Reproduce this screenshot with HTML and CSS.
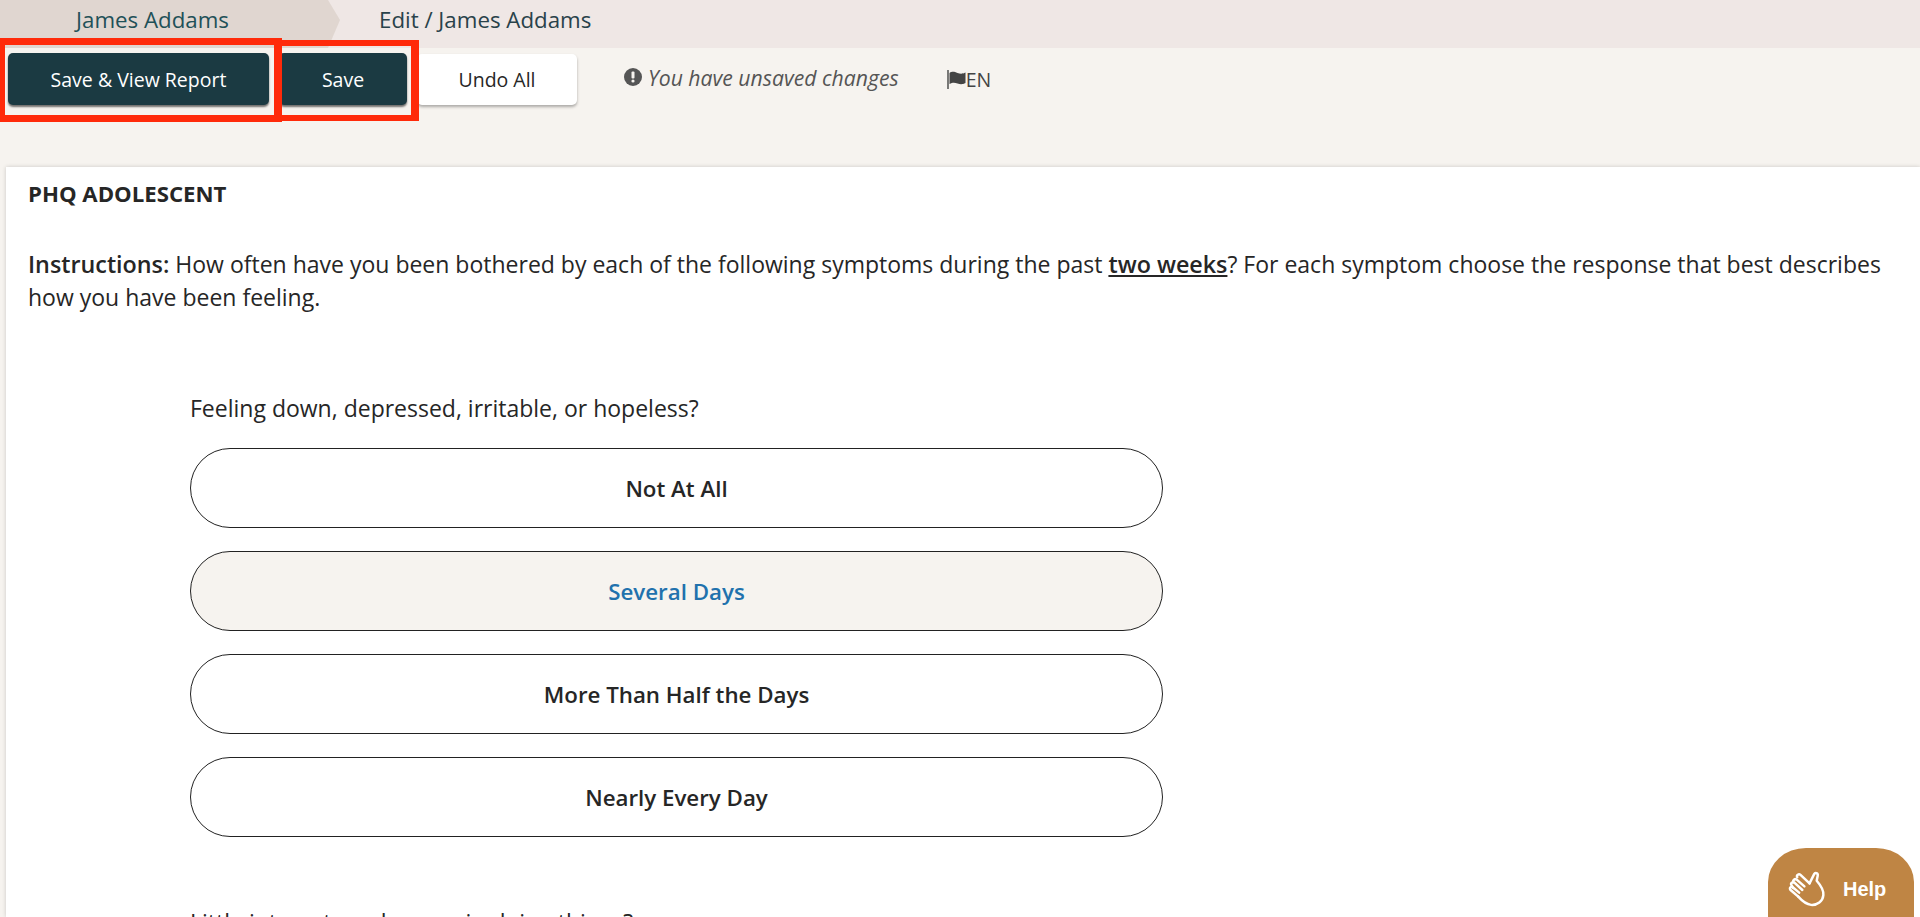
FILE: index.html
```html
<!DOCTYPE html>
<html lang="en">
<head>
<meta charset="utf-8">
<title>PHQ Adolescent</title>
<link rel="stylesheet" href="styles.css">
</head>
<body>
<nav class="crumbs">
  <a class="crumb-home">James Addams</a>
  <span class="crumb-current">Edit / James Addams</span>
</nav>
<div class="toolbar">
  <button class="btn btn-dark btn-report">Save &amp; View Report</button>
  <button class="btn btn-dark btn-save">Save</button>
  <button class="btn btn-light">Undo All</button>
  <span class="unsaved">
    <svg class="alert-icon" viewBox="0 0 18 18"><circle cx="9" cy="9" r="9" fill="#555"/><rect x="7.500" y="3.500" width="3" height="7" rx="1" fill="#f6f3ef"/><circle cx="9" cy="13" r="1.600" fill="#f6f3ef"/></svg>
    <em>You have unsaved changes</em>
  </span>
  <span class="lang">
    <svg class="flag-icon" viewBox="0 0 20 20"><path d="M1 1v19" stroke="#444" stroke-width="1.400" fill="none"/><path d="M2.500 4c3-2 5-1 8 0s5 1 8-.5V14c-3 1.500-5 1.500-8 .5s-5-1-8 .5z" fill="#444"/></svg>EN
  </span>
</div>
<main class="card">
  <h1 class="card-title">PHQ ADOLESCENT</h1>
  <p class="instructions"><strong>Instructions:</strong> How often have you been bothered by each of the following symptoms during the past <strong class="under">two weeks</strong>? For each symptom choose the response that best describes how you have been feeling.</p>
  <section class="question">
    <p class="q-text">Feeling down, depressed, irritable, or hopeless?</p>
    <div class="pill">Not At All</div>
    <div class="pill pill-on">Several Days</div>
    <div class="pill">More Than Half the Days</div>
    <div class="pill">Nearly Every Day</div>
  </section>
  <section class="question next">
    <p class="q-text">Little interest or pleasure in doing things?</p>
  </section>
</main>
<div class="mark mark-a"></div>
<div class="mark mark-b"></div>
<div class="help">
  <svg class="hand" viewBox="0 0 40 40" fill="none" stroke="#fff" stroke-width="2.400" stroke-linecap="round" stroke-linejoin="round"><path d="M10 27 2.500 20.500c-1.800-1.800.6-4.200 2.400-2.400l6 5"/><path d="M5 18.500 3.500 16c-1.500-2 1-4 3-2.500l7.500 7"/><path d="M5.500 13c-1.300-2 1.200-4 3-2.600L16 17"/><path d="M9 8c-1-2 1.500-3.800 3.200-2.200L21 14"/><path d="M21 14l4.500-9c1-2 4-1 3.500 1.500l-1 5c3.500 4 7 9 6.500 14-.5 6-6 10-12 9.500-4-.4-8-3-12.500-8"/></svg>
  <span>Help</span>
</div>
</body>
</html>
```

FILE: styles.css
```css
* { box-sizing: border-box; }
html, body { margin: 0; height: 917px; overflow: hidden; }
body {
  position: relative;
  background: #f6f3ef;
  color: #262626;
  font-family: "Open Sans", "Liberation Sans", sans-serif;
  font-size: 23px;
}
.crumbs {
  display: flex;
  align-items: center;
  height: 48px;
  background: #efe7e5;
  font-size: 22.300px;
  color: #29424a;
}
.crumb-home {
  display: flex;
  align-items: center;
  justify-content: center;
  width: 340px;
  height: 100%;
  padding: 0 35px 10px 0;
  background: #e0d6d0;
  color: #1f5158;
  clip-path: polygon(0 0, 328px 0, 340px 20px, 328px 100%, 0 100%);
}
.crumb-current { margin-left: 39px; padding-bottom: 10px; }
.toolbar {
  display: flex;
  align-items: flex-start;
  gap: 10px;
  height: 119px;
  padding: 5px 0 0 8px;
}
.btn {
  height: 52px;
  border: 0;
  border-radius: 5px;
  font: 19.500px "Open Sans", sans-serif;
}
.btn-dark {
  background: #1b3a42;
  color: #fff;
  box-shadow: 0 2px 2px rgba(0, 0, 0, .55);
}
.btn-report { width: 261px; }
.btn-save { width: 128px; }
.btn-light {
  width: 160px;
  margin-top: 1px;
  height: 51px;
  background: #fff;
  color: #262626;
  box-shadow: 0 2px 3px rgba(0, 0, 0, .3);
}
.unsaved {
  display: flex;
  align-items: center;
  gap: 6px;
  height: 48px;
  margin-left: 37px;
  font-size: 21.200px;
  color: #555;
}
.alert-icon { width: 18px; height: 18px; }
.lang {
  display: flex;
  align-items: center;
  height: 52px;
  margin-left: 38px;
  font-size: 19.500px;
  color: #444;
}
.flag-icon { width: 20px; height: 20px; margin-right: -1px; }
.card {
  height: 750px;
  margin-left: 6px;
  padding: 12px 28px 0 22px;
  background: #fff;
  box-shadow: 0 0 4px rgba(0, 0, 0, .18);
}
.card-title { margin: 0; font-size: 22.200px; line-height: 30px; font-weight: 700; }
.instructions { margin: 39px 0 0; line-height: 33px; }
.instructions strong { font-weight: 600; font-size: 23.300px; }
.under { text-decoration: underline; }
.question { width: 973px; margin: 79px 0 0 162px; }
.q-text { margin: 0; line-height: 30px; }
.question .q-text { margin-bottom: 25px; }
.next { margin-top: 70px; }
.pill {
  display: flex;
  align-items: center;
  justify-content: center;
  height: 80px;
  margin-bottom: 23px;
  border: 1.500px solid #222;
  border-radius: 40px;
  font-size: 22.300px;
  font-weight: 600;
}
.pill-on { background: #f6f3ef; color: #2171ad; }
.mark { position: absolute; border: 7px solid #ff2a0a; }
.mark-a { left: 0; top: 38px; width: 282px; height: 84px; border-left-width: 5px; border-right-width: 8px; }
.mark-b { left: 282px; top: 40px; width: 137px; height: 81px; border-width: 6px 8px 6px 0; }
.help {
  position: absolute;
  left: 1768px;
  top: 848px;
  display: flex;
  align-items: center;
  gap: 14px;
  width: 146px;
  height: 88px;
  padding: 0 0 6px 20px;
  background: #bf8544;
  border-radius: 38px 38px 0 0 / 34px 34px 0 0;
  color: #fff;
  font: 700 20px "Liberation Sans", sans-serif;
}
.hand { width: 41px; height: 41px; }
```
